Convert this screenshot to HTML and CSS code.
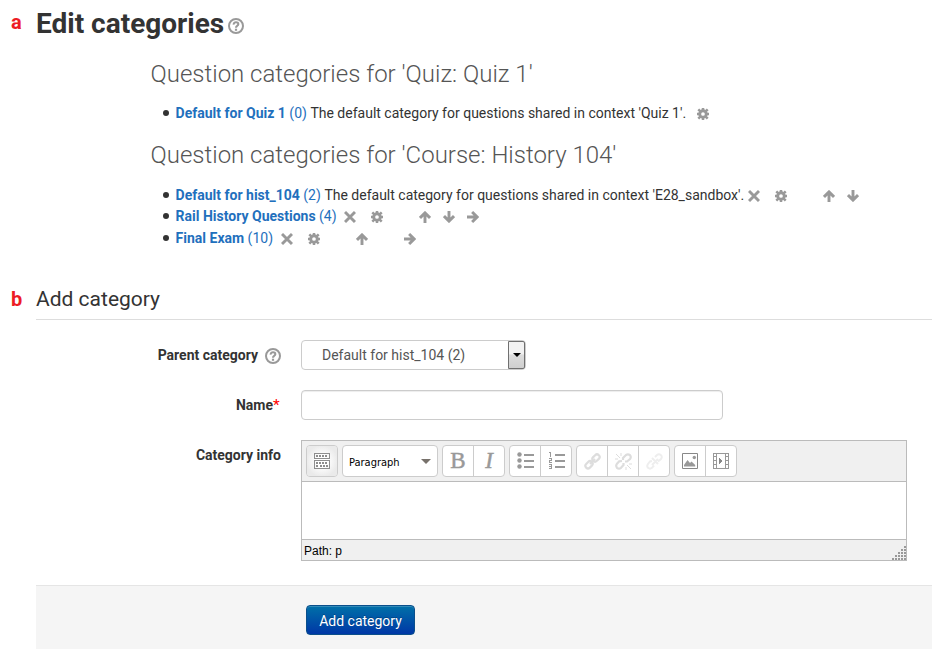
FILE: index.html
```html
<!DOCTYPE html>
<html lang="en">
<head>
<meta charset="utf-8">
<title>Edit categories</title>
<link rel="stylesheet" href="styles.css">
</head>
<body>
<svg class="defs" width="0" height="0" aria-hidden="true">
  <symbol id="help" viewBox="0 0 16 16"><circle cx="8" cy="8" r="7" fill="none" stroke="#999" stroke-width="2"/><path d="M5.7 6.6C5.5 3.4 10.5 3.5 10.3 6.2C10.3 7.8 8 7.8 8 9.8" fill="none" stroke="#999" stroke-width="2.1"/><rect x="6.9" y="10.7" width="2.2" height="2.1" fill="#999"/></symbol>
  <symbol id="cross" viewBox="0 0 12 12"><path d="M1 1l10 10M11 1l-10 10" stroke="#999" stroke-width="2.9" fill="none"/></symbol>
  <symbol id="gear" viewBox="0 0 12 12"><g stroke="#999" fill="none"><circle cx="6" cy="6" r="3.3" stroke-width="2.9"/><path d="M6 0v2M6 10v2M0 6h2M10 6h2M1.3 1.3l2 2M8.7 8.7l2 2M10.7 1.3L8.7 3.3M3.3 8.7l-2 2" stroke-width="2.5"/></g></symbol>
  <symbol id="up" viewBox="0 0 12 12"><path d="M6 12V2M1 6.9l5-5 5 5" stroke="#999" stroke-width="2.9" fill="none"/></symbol>
  <symbol id="down" viewBox="0 0 12 12"><path d="M6 0v10M1 5.1l5 5 5-5" stroke="#999" stroke-width="2.9" fill="none"/></symbol>
  <symbol id="right" viewBox="0 0 12 12"><path d="M0 6h10M5.1 1l5 5-5 5" stroke="#999" stroke-width="2.9" fill="none"/></symbol>
</svg>

<header class="title">
  <span class="mark">a</span>
  <h1>Edit categories</h1>
  <svg class="help"><use href="#help"/></svg>
</header>

<main class="lists">
  <h3 class="quiz-heading">Question categories for 'Quiz: Quiz 1'</h3>
  <ul>
    <li><a><b>Default for Quiz 1</b> (0)</a><span class="desc">The default category for questions shared in context 'Quiz 1'.</span><span class="icons lone"><svg><use href="#gear"/></svg></span></li>
  </ul>
  <h3 class="course-heading">Question categories for 'Course: History 104'</h3>
  <ul class="course">
    <li><a><b>Default for hist_104</b> (2)</a><span class="desc">The default category for questions shared in context 'E28_sandbox'.</span><span class="icons first"><svg><use href="#cross"/></svg><svg class="cog"><use href="#gear"/></svg><svg><use href="#up"/></svg><svg><use href="#down"/></svg></span></li>
    <li><a><b>Rail History Questions</b> (4)</a><span class="icons second"><svg><use href="#cross"/></svg><svg class="cog"><use href="#gear"/></svg><svg><use href="#up"/></svg><svg><use href="#down"/></svg><svg><use href="#right"/></svg></span></li>
    <li><a><b>Final Exam</b> (10)</a><span class="icons"><svg><use href="#cross"/></svg><svg class="cog"><use href="#gear"/></svg><svg><use href="#up"/></svg><svg></svg><svg><use href="#right"/></svg></span></li>
  </ul>
</main>

<form>
  <div class="legend"><span class="mark">b</span><h2>Add category</h2></div>
  <div class="row">
    <div class="label"><span>Parent category</span><svg class="help"><use href="#help"/></svg></div>
    <div class="select"><span>Default for hist_104 (2)</span><i class="drop"></i></div>
  </div>
  <div class="row">
    <div class="label"><span>Name</span><em>*</em></div>
    <input class="name" type="text" aria-label="Name">
  </div>
  <div class="row editor-row">
    <div class="label"><span>Category info</span></div>
    <div class="editor">
      <div class="toolbar">
        <div class="group"><span class="btn on"><svg width="16" height="16" shape-rendering="crispEdges"><g fill="none" stroke="#8d8d8d"><path d="M.5 .5h15v5H.5zM.5 7.5h15v8H.5z"/><path d="M2 3h12" stroke-width="2" stroke-dasharray="2 1"/><path d="M2 10h12" stroke-width="2" stroke-dasharray="2 1"/><path d="M2 13h3M6 13h5M12 13h2" stroke-width="2" stroke-dasharray="2 1"/></g></svg></span></div>
        <div class="group format"><span>Paragraph</span><i></i></div>
        <div class="group"><span class="btn letter">B</span><span class="btn letter italic">I</span></div>
        <div class="group lst"><span class="btn"><svg width="17" height="17"><g fill="#999"><circle cx="2.5" cy="2.5" r="2.2"/><circle cx="2.5" cy="8.5" r="2.2"/><circle cx="2.5" cy="14.5" r="2.2"/><path d="M7 2h10v2H7zM7 8h10v2H7zM7 14h10v2H7z"/></g></svg></span><span class="btn"><svg width="17" height="17" shape-rendering="crispEdges"><path d="M7 2h10v2H7zM7 8h10v2H7zM7 14h10v2H7z" fill="#999"/><path d="M1 .5h1.5V5M1 6.5h2.5v2h-2v2H4M1 12.5h2.5v4H1M1 14.5h2" fill="none" stroke="#999"/></svg></span></div>
        <div class="group"><span class="btn"><svg width="17" height="17" fill="none" stroke="#ddd" stroke-width="2.2"><rect x="-3.7" y="-2.6" width="8" height="5.2" rx="2.6" transform="translate(4.8 12) rotate(-45)"/><rect x="-4" y="-2.6" width="8" height="5.2" rx="2.6" transform="translate(12 5) rotate(-45)"/><path d="M6 11l5-5"/></svg></span><span class="btn"><svg width="17" height="17" fill="none" stroke="#ddd" stroke-width="2.2"><path d="M7 8L4.2 8.3L1.8 11Q.5 13 2 14.8Q4 16.5 6 14.8L8.5 12V10M8 7V5L11 2Q13 .5 15 2.2Q16.5 4 15 6L12 8.5H10"/><path d="M1 1l4 4M6 0v3M0 6h3M12 12l4 4M11 17v-3M14 11h3" stroke-width="1"/></svg></span><span class="btn"><svg width="17" height="17" fill="none" stroke="#eee" stroke-width="2"><path d="M6 8L4 8.5L2 11Q.5 13 2 14.8Q4 16.5 6 14.8L8 12.5M9 4L11 2Q13 .5 15 2.2Q16.5 4 15 6L12 8.5M6 5l6 6M12 6l-6 6"/></svg></span></div>
        <div class="group"><span class="btn"><svg width="16" height="16"><path d="M.5 .5h15v15H.5z" fill="none" stroke="#888"/><path d="M2 13.5V12l3.5-5 2.5 3 1.5-1.5 3.7 3.5v1.5z" fill="#999"/><circle cx="12.3" cy="4.5" r="1.7" fill="#999"/></svg></span><span class="btn"><svg width="16" height="16" shape-rendering="crispEdges"><path d="M.5 .5h15v15H.5zM3.5 0v16M12.5 0v16" fill="none" stroke="#999"/><path d="M2 3v13M14 3v13" stroke="#999" stroke-width="2" stroke-dasharray="1 3"/><path d="M6 5l4 3-4 3z" fill="#888"/></svg></span></div>
      </div>
      <div class="content"></div>
      <div class="status"><span>Path: p</span><svg width="14" height="14" shape-rendering="crispEdges"><g stroke="#999" stroke-width="2" stroke-dasharray="2 1"><path d="M12 1h2M9 4h5M6 7h8M3 10h11M0 13h14"/></g></svg></div>
    </div>
  </div>
  <div class="actions"><button type="button">Add category</button></div>
</form>
</body>
</html>
```

FILE: styles.css
```css
* { box-sizing: border-box; }
body { margin: 0; width: 932px; height: 649px; overflow: hidden; background: #fff; color: #333; font: 14px/20px Roboto, sans-serif; }
.defs { display: block; height: 0; }
h1, h2, h3, ul { margin: 0; padding: 0; }
svg { flex: none; }
.mark { width: 25px; color: #ed1c24; font-weight: 700; font-size: 20px; }
.help { width: 16px; height: 16px; }
.title { display: flex; align-items: center; height: 48px; padding-left: 11px; }
.title .mark { margin-top: -5px; }
.title h1 { font-size: 28px; line-height: 40px; font-weight: 700; }
.title .help { margin: 4px 0 0 4px; }
.lists { padding: 6px 0 0 151px; height: 228px; }
h3 { color: #555; font-size: 24px; font-weight: 300; line-height: 40px; height: 40px; margin-left: -.5px; }
.course-heading { margin-top: 12px; }
ul { list-style: none; padding-top: 8px; margin-left: -.4px; }
ul.course { padding-top: 9px; }
li { display: flex; align-items: center; height: 21.4px; white-space: pre; padding-left: 12px; }
li::before { content: ""; width: 6px; height: 6px; border-radius: 50%; background: #333; margin-right: 7px; }
a { color: #1f70bd; }
.desc { margin-left: 3.5px; }
.icons { display: flex; align-items: center; margin-left: 8px; padding-top: 2px; }
.icons.lone { margin-left: 11px; }
.icons.first { margin-left: 4px; }
.icons.second { margin-left: 7.3px; }
.icons svg { width: 12px; height: 12px; margin-right: 12px; }
.icons .cog { margin-left: 3px; margin-right: 36px; }
.legend { display: flex; align-items: center; height: 44px; padding: 2px 0 0 11px; position: relative; }
.legend::after { content: ""; position: absolute; left: 36px; right: 0; bottom: 0; border-bottom: 1px solid #ddd; }
.legend h2 { font-size: 21px; font-weight: 400; line-height: 40px; }
.row { display: flex; margin-top: 20px; height: 30px; }
.label { width: 281px; margin-right: 20px; height: 30px; display: flex; align-items: center; justify-content: flex-end; font-weight: 700; font-size: 14px; }
.label .help { margin: 1px 0 0 7px; }
.label em { font-style: normal; font-weight: 400; color: #f00; font-size: 15.5px; width: 8px; }
.select { width: 225px; height: 30px; border: 1px solid #ccc; border-radius: 4px; color: #555; padding: 0 0 0 20px; display: flex; align-items: center; justify-content: space-between; }
.drop { width: 17px; height: 28px; border: 1px solid #707070; border-radius: 0 2px 2px 0; background: linear-gradient(#f2f2f2 45%, #ddd 50%, #cfcfcf); display: flex; align-items: center; justify-content: center; }
.drop::after { content: ""; border: 4px solid transparent; border-top-color: #000; border-bottom: 0; }
.name { width: 422px; height: 30px; border: 1px solid #ccc; border-radius: 4px; box-shadow: inset 0 1px 1px rgba(0,0,0,.075); padding: 4px 6px; font: inherit; }
.editor-row { height: 121px; }
.editor { width: 606px; height: 121px; border: 1px solid #bbb; background: #f0f0f0; }
.toolbar { display: flex; height: 40px; padding: 4px 0 0 4px; gap: 4px; }
.group { display: flex; height: 32px; background: #fff; border: 1px solid #ccc; border-radius: 4px; overflow: hidden; }
.btn { width: 30px; height: 30px; display: flex; align-items: center; justify-content: center; }
.btn + .btn { width: 31px; border-left: 1px solid #ccc; }
.lst svg { margin: -1px 0 0 0; }
.btn.on { background: radial-gradient(#fff 25%, #eaeaea 75%); }
.format { width: 96px; align-items: center; justify-content: space-between; padding: 0 6px 0 6px; color: #000; font: 11px "DejaVu Sans Condensed", "DejaVu Sans", sans-serif; }
.format span { margin-top: 2px; }
.format i { border: 5px solid transparent; border-top-color: #77716b; border-bottom: 0; }
.letter { font: 400 23px "Liberation Serif", serif; color: #999; -webkit-text-stroke: .5px #999; }
.italic { font-style: italic; font-weight: 400; }
.content { height: 59px; background: #fff; border: solid #bbb; border-width: 1px 0; }
.status { display: flex; justify-content: space-between; align-items: center; height: 20px; padding-left: 2px; color: #000; font: 12px "Liberation Sans", sans-serif; }
.status span { margin-top: 1px; }
.status svg { align-self: flex-end; }
.actions { margin: 24px 0 0 36px; height: 64px; background: #f5f5f5; border-top: 1px solid #e5e5e5; padding: 19px 0 0 270px; }
button { display: block; width: 109px; height: 30px; padding: 1px 0 0; border: 1px solid #0a4f8b; border-radius: 4px; color: #fff; background: linear-gradient(#0070a8, #0037a6); box-shadow: inset 0 1px 0 rgba(255,255,255,.2); font: 14px Roboto, sans-serif; text-shadow: 0 -1px 0 rgba(0,0,0,.25); }
```
